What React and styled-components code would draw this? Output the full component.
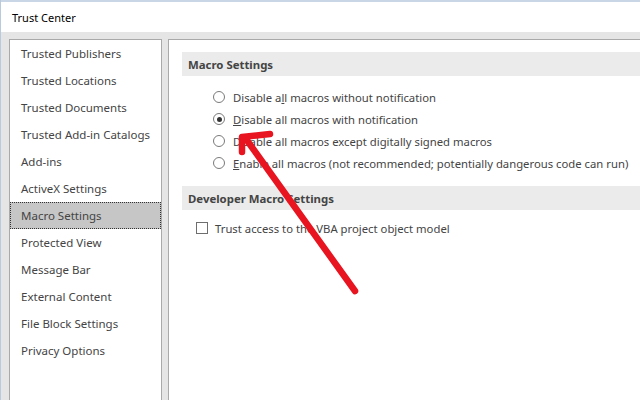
import React from "react";
import styled, { createGlobalStyle } from "styled-components";

const GlobalStyle = createGlobalStyle`
	html, body {
		margin: 0;
		padding: 0;
		width: 640px;
		height: 400px;
		overflow: hidden;
		background: #e5e5e5;
	}
	* {
		box-sizing: border-box;
	}
`;

const navItems = [
	"Trusted Publishers",
	"Trusted Locations",
	"Trusted Documents",
	"Trusted Add-in Catalogs",
	"Add-ins",
	"ActiveX Settings",
	"Macro Settings",
	"Protected View",
	"Message Bar",
	"External Content",
	"File Block Settings",
	"Privacy Options",
];

const radios = [
	{ before: "Disable a", key: "l", after: "l macros without notification" },
	{ before: "", key: "D", after: "isable all macros with notification", checked: true },
	{ before: "Disable all macros except di", key: "g", after: "itally signed macros", hideKey: true },
	{ before: "", key: "E", after: "nable all macros (not recommended; potentially dangerous code can run)" },
];

const App = () => {
	return (
		<Window>
			<GlobalStyle />
			<BehindStrip />
			<TitleBar>Trust Center</TitleBar>
			<Body>
				<Nav>
					{navItems.map((item) => (
						<NavItem key={item} selected={item === "Macro Settings"}>
							{item}
						</NavItem>
					))}
				</Nav>
				<Content>
					<SectionHeader>Macro Settings</SectionHeader>
					<RadioList>
						{radios.map((r, i) => (
							<RadioRow key={i}>
								<Radio checked={r.checked} />
								<span>
									{r.before}
									<Key plain={r.hideKey}>{r.key}</Key>
									{r.after}
								</span>
							</RadioRow>
						))}
					</RadioList>
					<SectionHeader>Developer Macro Settings</SectionHeader>
					<CheckRow>
						<CheckBox />
						<span>Trust access to the VBA project object model</span>
					</CheckRow>
				</Content>
			</Body>
			<Arrow viewBox="0 0 640 400">
				<g stroke="#e8141f" strokeWidth="6.5" strokeLinecap="round" strokeLinejoin="round" fill="none">
					<line x1="355" y1="291" x2="246" y2="139" />
					<polyline points="242,152 242,137 270,134" />
				</g>
			</Arrow>
		</Window>
	);
};

const Window = styled.div`
	position: relative;
	width: 640px;
	height: 400px;
	display: flex;
	flex-direction: column;
	font-family: "Segoe UI", "Noto Sans", "Open Sans", sans-serif;
	color: #444444;
	border-left: 1px solid #b9c9de;
	overflow: hidden;
`;

const BehindStrip = styled.div`
	height: 2px;
	flex: none;
	background: #c9d6e6;
`;

const TitleBar = styled.div`
	height: 30px;
	flex: none;
	background: #ffffff;
	padding: 1px 0 0 11px;
	display: flex;
	align-items: center;
	font-size: 11px;
	color: #000000;
`;

const Body = styled.div`
	flex: 1;
	display: flex;
	gap: 6px;
	padding: 7px 0 0 8px;
	background: #e5e5e5;
	min-height: 0;
`;

const Nav = styled.div`
	width: 153px;
	flex: none;
	background: #ffffff;
	border: 1px solid #a9a9a9;
	border-bottom: none;
	display: flex;
	flex-direction: column;
`;

const NavItem = styled.div`
	height: 27px;
	display: flex;
	align-items: center;
	padding-left: 11px;
	font-size: 11.5px;
	color: #444444;
	background: ${(p) => (p.selected ? "#c6c6c6" : "transparent")};
	outline: ${(p) => (p.selected ? "1px dotted #333333" : "none")};
	outline-offset: -1px;
`;

const Content = styled.div`
	flex: 1;
	background: #ffffff;
	border: 1px solid #a9a9a9;
	border-right: none;
	border-bottom: none;
	padding: 12px 0 0 13px;
	display: flex;
	flex-direction: column;
`;

const SectionHeader = styled.div`
	height: 24px;
	flex: none;
	background: #ebebeb;
	display: flex;
	align-items: center;
	padding-left: 6px;
	font-size: 11.4px;
	font-weight: bold;
	color: #444444;
`;

const RadioList = styled.div`
	display: flex;
	flex-direction: column;
	padding: 10px 0 12px 31px;
`;

const RadioRow = styled.div`
	height: 22px;
	display: flex;
	align-items: center;
	gap: 8px;
	font-size: 11.3px;
	color: #444444;
	white-space: nowrap;
`;

const Radio = styled.span`
	width: 12px;
	height: 12px;
	flex: none;
	border-radius: 50%;
	border: 1px solid #7a7a7a;
	background: #ffffff;
	position: relative;
	&::after {
		content: "";
		display: ${(p) => (p.checked ? "block" : "none")};
		position: absolute;
		left: 2.5px;
		top: 2.5px;
		width: 5px;
		height: 5px;
		border-radius: 50%;
		background: #333333;
	}
`;

const Key = styled.span`
	text-decoration: ${(p) => (p.plain ? "none" : "underline")};
`;

const CheckRow = styled.div`
	height: 22px;
	margin-top: 7px;
	padding-left: 14px;
	display: flex;
	align-items: center;
	gap: 7px;
	font-size: 11.3px;
	color: #444444;
	white-space: nowrap;
`;

const CheckBox = styled.span`
	width: 12px;
	height: 12px;
	flex: none;
	border: 1px solid #6e6e6e;
	background: #ffffff;
`;

const Arrow = styled.svg`
	position: absolute;
	left: -1px;
	top: 0;
	width: 640px;
	height: 400px;
	pointer-events: none;
`;

export default App;
